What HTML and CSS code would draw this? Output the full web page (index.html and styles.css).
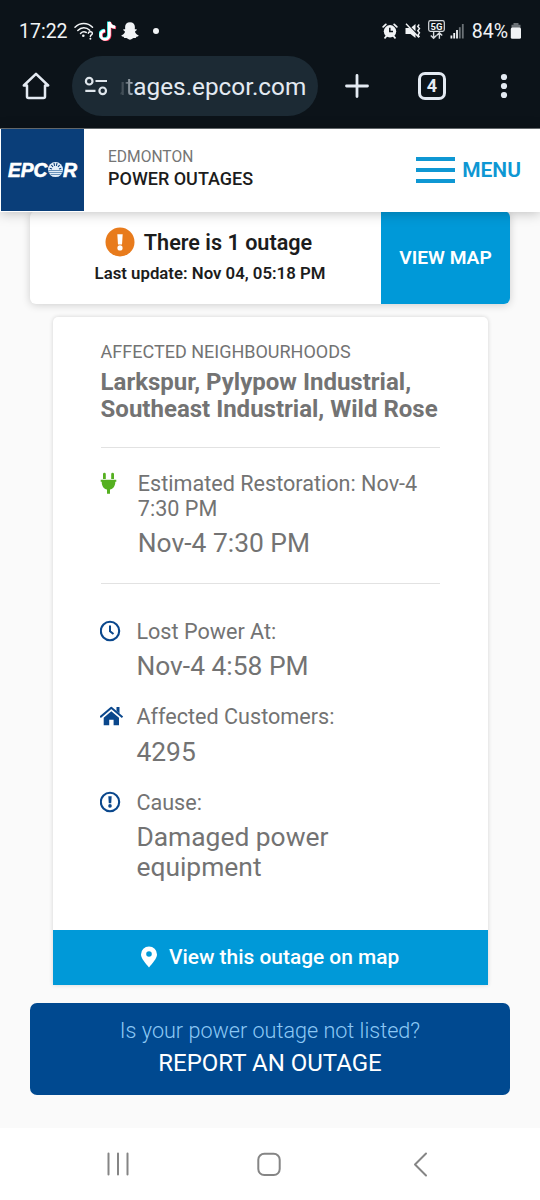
FILE: index.html
```
<!DOCTYPE html>
<html lang="en">
<head>
    <meta charset="UTF-8">
    <meta name="viewport" content="width=device-width, initial-scale=1">
    <title>EPCOR Power Outages</title>
    <link rel="stylesheet" href="styles.css">
</head>
<body>
<div class="phone-top">
    <div class="status-bar">
        <div class="status-left">
            <span class="clock">17:22</span>
            <svg class="icon-wifi" width="20" height="18" viewBox="0 0 20 18">
                <g fill="none" stroke="#f1f3f5" stroke-width="1.5" stroke-linecap="round">
                    <path d="M1 5.2C6 .3 13.500 .3 18.500 5.200"/>
                    <path d="M3.800 8.500C7.300 5 12.200 5 15.700 8.200"/>
                    <path d="M6.500 11.500C8.400 9.600 10.500 9.500 12.300 10.500"/>
                    <path d="M14.300 11.200C14.700 9 18.800 9.200 18.300 11.600C18 13 16.400 12.800 16.400 14.500"/>
                </g>
                <circle cx="9.300" cy="13.800" r="1.300" fill="#f1f3f5"/>
                <circle cx="16.400" cy="16.800" r="1" fill="#f1f3f5"/>
            </svg>
            <svg class="icon-tiktok" width="18" height="20" viewBox="0 0 18 20">
                <g fill="none" stroke-width="2.900">
                    <path stroke="#25f4ee" d="M9.500 .5V13.500A4.300 4.300 0 1 1 5.200 9.200M9.500 .5C9.800 3.600 12 5.500 15.600 5.700"/>
                    <path stroke="#fe2c55" d="M11 1.500V14.500A4.300 4.300 0 1 1 6.700 10.200M11 1.500C11.300 4.600 13.500 6.500 17.100 6.700"/>
                    <path stroke="#fff" d="M10.300 1V14A4.300 4.300 0 1 1 6 9.700M10.300 1C10.600 4.100 12.800 6 16.300 6.200"/>
                </g>
            </svg>
            <svg class="icon-snap" width="18" height="18" viewBox="0 0 18 18">
                <path fill="#f1f3f5" d="M9 .3C12 .3 13.900 2.300 13.900 5L13.800 7.200C14.500 7.500 15.500 6.900 15.800 7.700C16 8.600 13.900 8.900 14 9.900C14.600 11.500 15.800 12.700 17.500 13.200C18 14.200 16.300 14.600 15.300 14.800C15 15.400 15.200 15.900 14.600 16C13.500 15.900 12.600 15.800 11.600 16.500C10 18 8 18 6.400 16.500C5.400 15.800 4.500 15.900 3.400 16C2.800 15.900 3 15.400 2.700 14.800C1.700 14.600 0 14.200 .5 13.200C2.200 12.700 3.400 11.500 4 9.900C4.100 8.900 2 8.600 2.200 7.700C2.500 6.900 3.500 7.500 4.200 7.200L4.100 5C4.100 2.300 6 .3 9 .3Z"/>
            </svg>
            <span class="dot"></span>
        </div>
        <div class="status-right">
            <svg width="16" height="16" viewBox="0 0 16 16">
                <path fill="none" stroke="#f1f3f5" stroke-width="1.800" stroke-linecap="round" d="M1.200 3.800L3.800 1.400M14.800 3.800L12.200 1.400M3 14.800L4.500 13M13 14.800L11.500 13"/>
                <circle cx="8" cy="8.300" r="6.200" fill="#f1f3f5"/>
                <path fill="none" stroke="#0c1319" stroke-width="1.500" d="M7.800 4.700V8.600H11"/>
            </svg>
            <svg class="icon-mute" width="16" height="16" viewBox="0 0 16 16">
                <path fill="#f1f3f5" d="M.5 5H4.500L10.500 11V15L5.500 11H.5ZM6.500 4.200L10.500 1V8.300Z"/>
                <path fill="none" stroke="#f1f3f5" stroke-width="1.400" d="M1 .8L14 14.500M14.200 1.500L12.700 3.500L14.500 5.500L12.800 7.700L14.500 9.800L13 12L14.500 14.200"/>
            </svg>
            <svg class="icon-5g" width="17" height="20" viewBox="0 0 17 20">
                <rect x=".7" y=".7" width="15.600" height="10.600" rx="1.800" fill="none" stroke="#d8dcdf" stroke-width="1.200"/>
                <text class="net-label" x="8.500" y="9.500" text-anchor="middle">5G</text>
                <path fill="none" stroke="#d8dcdf" stroke-width="1.400" d="M5.600 11.500V18M2.800 15.500L5.600 18.300L8.400 15.500M11.400 18.800V13M8.600 15.500L11.400 12.700L14.200 15.500"/>
            </svg>
            <svg class="icon-signal" width="15" height="15" viewBox="0 0 15 15">
                <g fill="#f1f3f5">
                    <rect x=".5" y="11.500" width="1.800" height="3"/>
                    <rect x="3.300" y="9" width="1.800" height="5.500"/>
                    <rect x="6.100" y="6" width="1.800" height="8.500"/>
                </g>
                <g fill="#6c7277">
                    <rect x="8.900" y="3.200" width="1.800" height="11.300"/>
                    <rect x="11.900" y="0" width="1.800" height="14.500"/>
                </g>
            </svg>
            <span class="percent">84%</span>
            <svg class="icon-battery" width="12" height="16" viewBox="0 0 12 16">
                <path fill="#6c7277" d="M3.500 0H8.500V1.800H10.500V5H1.500V1.800H3.500Z"/>
                <rect x=".8" y="4.400" width="10.200" height="11.400" rx="1.500" fill="#f1f3f5"/>
            </svg>
        </div>
    </div>
    <div class="browser-bar">
        <svg class="icon-home" width="28" height="28" viewBox="0 0 28 28">
            <path fill="none" stroke="#e4eaf2" stroke-width="2.500" stroke-linejoin="round" stroke-linecap="round" d="M1.800 13.500L14 1.800L26.200 13.500H23V24.500Q23 26 21.500 26H6.500Q5 26 5 24.500V13.500Z"/>
        </svg>
        <div class="url-pill">
            <svg width="24" height="20" viewBox="0 0 24 20">
                <g fill="none" stroke="#dfe6ec" stroke-width="2.200">
                    <circle cx="5.200" cy="5.200" r="3.300"/>
                    <path d="M11.500 5H23M1.300 14.800H11.500"/>
                    <circle cx="18.700" cy="14.800" r="3.300"/>
                </g>
            </svg>
            <span class="url"><span class="url-fade">ut</span>ages.epcor.com</span>
        </div>
        <svg class="icon-plus" width="24" height="24" viewBox="0 0 24 24">
            <path fill="none" stroke="#e4eaf2" stroke-width="2.800" stroke-linecap="round" d="M12 1.500V22.500M1.500 12H22.500"/>
        </svg>
        <span class="tabs">4</span>
        <svg class="icon-more" width="8" height="26" viewBox="0 0 8 26">
            <g fill="#e4eaf2">
                <circle cx="4" cy="4" r="3.100"/>
                <circle cx="4" cy="13" r="3.100"/>
                <circle cx="4" cy="22" r="3.100"/>
            </g>
        </svg>
    </div>
</div>

<header class="site-header">
    <div class="logo">
        <svg width="72" height="20" viewBox="0 0 72 20">
            <text class="logo-text" x="1" y="16.500" textLength="39.500" lengthAdjust="spacingAndGlyphs">EPC</text>
            <text class="logo-text" x="56" y="16.500">R</text>
            <circle cx="48.500" cy="9.600" r="7.500" fill="#e3edf7"/>
            <path stroke="#0a3e79" stroke-width="1.100" d="M42.800 8.200L45 9M44.300 5L46 6.900M47 3L47.600 5.800M50 3L49.400 5.800M52.700 5L51 6.900M54.200 8.200L52 9"/>
            <path stroke="#5c89b3" stroke-width=".9" d="M41.500 10.500H55.500M42 12.500H55M43.500 14.500H53.500"/>
        </svg>
    </div>
    <div class="site-name">
        <div class="city">EDMONTON</div>
        <div class="title">POWER OUTAGES</div>
    </div>
    <div class="menu">
        <div class="burger"><i></i><i></i><i></i></div>
        <span>MENU</span>
    </div>
</header>

<main>
    <section class="summary">
        <div class="summary-info">
            <div class="count">
                <svg width="30" height="30" viewBox="0 0 30 30">
                    <circle cx="15" cy="15" r="14.500" fill="#e87b1c"/>
                    <path fill="#fff" d="M12.300 7.200H17.700L17 17.400H13Z"/>
                    <circle cx="15" cy="20.900" r="2.600" fill="#fff"/>
                </svg>
                <span>There is 1 outage</span>
            </div>
            <div class="updated">Last update: Nov 04, 05:18 PM</div>
        </div>
        <div class="view-map">VIEW MAP</div>
    </section>

    <section class="outage">
        <div class="outage-body">
            <div class="area-label">AFFECTED NEIGHBOURHOODS</div>
            <h2>Larkspur, Pylypow Industrial,<br>Southeast Industrial, Wild Rose</h2>
            <hr>
            <div class="item restoration">
                <svg width="18" height="24" viewBox="0 0 18 24">
                    <path fill="#55b020" d="M3 2.200A1.300 1.300 0 0 1 5.800 2.200V7H3ZM11.200 2.200A1.300 1.300 0 0 1 14 2.200V7H11.200ZM.7 7.700H16.300V9.800H15.300C15.300 14.500 13 17 10 17.500V21.800H7V17.500C4 17 1.700 14.500 1.700 9.800H.7Z"/>
                </svg>
                <div>
                    <div class="label">Estimated Restoration: Nov-4<br>7:30 PM</div>
                    <div class="value">Nov-4 7:30 PM</div>
                </div>
            </div>
            <hr>
            <div class="items">
                <div class="item">
                    <svg width="24" height="24" viewBox="0 0 24 24">
                        <circle cx="10" cy="11" r="9.200" fill="none" stroke="#0a478c" stroke-width="2.100"/>
                        <path fill="none" stroke="#0a478c" stroke-width="2" d="M10 5.500V11.200L13.500 14"/>
                    </svg>
                    <div>
                        <div class="label">Lost Power At:</div>
                        <div class="value">Nov-4 4:58 PM</div>
                    </div>
                </div>
                <div class="item">
                    <svg width="24" height="24" viewBox="0 0 24 24">
                        <path fill="none" stroke="#0a478c" stroke-width="2" stroke-linejoin="round" d="M.2 12.200L11.300 2.800L22.500 12.200"/>
                        <path fill="#0a478c" d="M16.500 2H19.500V8.500L16.500 6ZM11.300 6.300L19 12.700V20.300H13.600V14.800H9.200V20.300H3.700V12.700Z"/>
                    </svg>
                    <div>
                        <div class="label">Affected Customers:</div>
                        <div class="value">4295</div>
                    </div>
                </div>
                <div class="item">
                    <svg width="24" height="24" viewBox="0 0 24 24">
                        <circle cx="10" cy="11" r="9.200" fill="none" stroke="#0a478c" stroke-width="2.100"/>
                        <path fill="#0a478c" d="M8.300 5.300H11.700L11.200 12.200H8.800Z"/>
                        <circle cx="10" cy="14.900" r="1.800" fill="#0a478c"/>
                    </svg>
                    <div>
                        <div class="label">Cause:</div>
                        <div class="value">Damaged power<br>equipment</div>
                    </div>
                </div>
            </div>
        </div>
        <div class="on-map">
            <svg width="18" height="22" viewBox="0 0 18 22">
                <path fill="#fff" fill-rule="evenodd" d="M9 .5A8 8 0 0 1 17 8.500C17 12.500 12.500 17 9 21.500C5.500 17 1 12.500 1 8.500A8 8 0 0 1 9 .5ZM9 5.200A2.800 2.800 0 1 0 9 10.800A2.800 2.800 0 1 0 9 5.200Z"/>
            </svg>
            <span>View this outage on map</span>
        </div>
    </section>

    <section class="report">
        <div class="question">Is your power outage not listed?</div>
        <div class="action">REPORT AN OUTAGE</div>
    </section>
</main>

<nav class="phone-nav">
    <svg width="24" height="26" viewBox="0 0 24 26">
        <path stroke="#858585" stroke-width="2" stroke-linecap="round" d="M2.500 2.500V23.500M12 2.500V23.500M21.500 2.500V23.500"/>
    </svg>
    <svg width="24" height="26" viewBox="0 0 24 26">
        <rect x="1.300" y="2.700" width="21.400" height="21.400" rx="6" fill="none" stroke="#858585" stroke-width="2"/>
    </svg>
    <svg width="24" height="26" viewBox="0 0 24 26">
        <path fill="none" stroke="#858585" stroke-width="2" stroke-linecap="round" stroke-linejoin="round" d="M18 2.500L7 13.500L18 24.500"/>
    </svg>
</nav>
</body>
</html>
```
FILE: styles.css
```
* {
    box-sizing: border-box;
}

body {
    margin: 0;
    width: 540px;
    height: 1200px;
    display: flex;
    flex-direction: column;
    overflow: hidden;
    background: #fafafa;
    font-family: Roboto, "Liberation Sans", sans-serif;
    color: #1c1c1c;
    white-space: nowrap;
}

svg {
    display: block;
    flex: none;
}

/* phone status bar and browser toolbar */
.phone-top {
    height: 129px;
    flex: none;
    background: #0c1319;
    border-bottom: 1px solid #6e7376;
    color: #f1f3f5;
}

.status-bar {
    height: 56px;
    padding: 6px 18px 0 19px;
    display: flex;
    align-items: center;
    justify-content: space-between;
}

.status-left,
.status-right {
    display: flex;
    align-items: center;
}

.clock,
.percent {
    font-size: 19.5px;
}

.icon-wifi {
    margin-left: 6px;
}

.icon-tiktok {
    margin-left: 5px;
}

.icon-snap {
    margin-left: 4px;
}

.dot {
    width: 6px;
    height: 6px;
    margin-left: 14px;
    border-radius: 50%;
    background: #f1f3f5;
}

.icon-mute {
    margin-left: 7px;
}

.icon-5g {
    margin: -3px 0 0 7px;
}

.net-label {
    font-size: 9.5px;
    font-weight: 700;
    fill: #f1f3f5;
}

.icon-signal {
    margin-left: 5px;
}

.percent {
    margin-left: 7px;
}

.icon-battery {
    margin-left: 2px;
}

.browser-bar {
    display: flex;
    align-items: center;
    padding-left: 22px;
    color: #e4eaf2;
}

.url-pill {
    width: 246px;
    height: 60px;
    margin-left: 22px;
    padding-left: 12px;
    border-radius: 30px;
    background: #1c2a34;
    display: flex;
    align-items: center;
}

.url {
    margin-left: 4px;
    font-size: 24.3px;
}

/* start of the long address fades out */
.url-fade {
    background: linear-gradient(90deg, transparent 38%, #3d4951 42%, #4a565f 58%, #b4bdc5);
    background-clip: text;
    -webkit-background-clip: text;
    color: transparent;
}

.icon-plus {
    margin-left: 27px;
}

.tabs {
    width: 28px;
    height: 28px;
    margin-left: 49px;
    border: 3px solid #e4eaf2;
    border-radius: 7px;
    font-size: 18px;
    font-weight: 700;
    line-height: 22px;
    text-align: center;
}

.icon-more {
    margin-left: 54px;
}

/* site header */
.site-header {
    position: relative;
    z-index: 1;
    height: 83px;
    flex: none;
    display: flex;
    background: #fff;
    box-shadow: 0 1px 12px rgba(0, 0, 0, 0.25);
}

.logo {
    width: 83px;
    height: 82px;
    margin-left: 1px;
    padding: 31px 0 0 6px;
    background: #0a3e79;
}

.logo-text {
    font: italic 700 19.5px "Liberation Sans", sans-serif;
    fill: #fff;
    stroke: #fff;
    stroke-width: 0.6px;
}

.site-name {
    margin-left: 24px;
    padding-top: 18px;
}

.city {
    font-size: 15.6px;
    line-height: 20px;
    color: #757575;
}

.title {
    font-size: 18px;
    font-weight: 500;
    line-height: 24px;
}

.menu {
    display: flex;
    align-items: center;
    margin: 0 19px 0 auto;
    padding-bottom: 1px;
    font-size: 21px;
    font-weight: 600;
    color: #0e97d3;
}

.burger {
    width: 39px;
    margin-right: 7px;
    display: grid;
    gap: 7px;
}

.burger i {
    height: 4px;
    background: #0e97d3;
}

/* outage summary */
.summary {
    height: 93px;
    margin: -1px 30px 0;
    display: flex;
    border-radius: 6px;
    overflow: hidden;
    background: #fff;
    box-shadow: 0 1px 8px rgba(0, 0, 0, 0.18);
}

.summary-info {
    flex: 1;
    padding-top: 16px;
    text-align: center;
    font-weight: 600;
}

.count {
    display: flex;
    justify-content: center;
    gap: 9px;
    padding-left: 6px;
    font-size: 21.6px;
    line-height: 31px;
}

.updated {
    margin-left: 9px;
    font-size: 16.8px;
    line-height: 31px;
}

.view-map {
    width: 129px;
    background: #0099d8;
    color: #fff;
    font-size: 19.2px;
    font-weight: 600;
    line-height: 93px;
    text-align: center;
}

/* outage card */
.outage {
    width: 435px;
    height: 668px;
    margin: 13px 0 0 52.6px;
    display: flex;
    flex-direction: column;
    border-radius: 5px 5px 0 0;
    background: #fff;
    box-shadow: 0 0 4px rgba(0, 0, 0, 0.16);
    color: #737373;
}

.outage-body {
    flex: 1;
    padding: 21.5px 48px 0;
}

.area-label {
    font-size: 18px;
    line-height: 25px;
}

h2 {
    margin: 5.5px 0 24px;
    font-size: 24px;
    font-weight: 700;
    line-height: 27px;
}

hr {
    height: 1px;
    margin: 0;
    border: 0;
    background: #e2e2e2;
}

.item {
    display: flex;
    gap: 12.8px;
}

.item > svg {
    margin-left: -1px;
}

.restoration {
    gap: 20.2px;
    padding: 24px 0 25px;
}

.items {
    display: grid;
    gap: 24.6px;
    padding-top: 36px;
}

.label {
    font-size: 21.6px;
    line-height: 24.5px;
}

.value {
    margin-top: 6.7px;
    font-size: 26.4px;
    line-height: 30px;
}

.on-map {
    height: 55px;
    padding: 0 1px 1px 0;
    display: flex;
    align-items: center;
    justify-content: center;
    gap: 11px;
    background: #0099d8;
    color: #fff;
    font-size: 20.9px;
    font-weight: 500;
}

.report {
    height: 92px;
    margin: 18px 30px 0;
    padding-top: 14px;
    border-radius: 7px;
    background: #004990;
    color: #fff;
    text-align: center;
}

.question {
    font-size: 21.6px;
    font-weight: 300;
    line-height: 28px;
    color: #8cc8f5;
}

.action {
    font-size: 24px;
    line-height: 36px;
}

/* phone navigation */
.phone-nav {
    height: 72px;
    flex: none;
    margin-top: auto;
    padding: 0 108px 0 106px;
    display: flex;
    align-items: center;
    justify-content: space-between;
    background: #fff;
}
```
